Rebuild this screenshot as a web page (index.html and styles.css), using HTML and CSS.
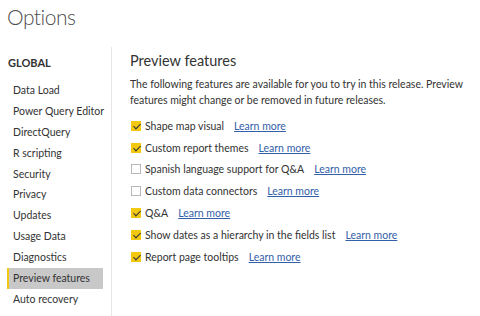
FILE: index.html
```html
<!DOCTYPE html>
<html lang="en">
<head>
    <meta charset="UTF-8">
    <title>Options</title>
    <link rel="stylesheet" href="styles.css">
</head>
<body>
    <div class="dialog">
        <h1 class="title">Options</h1>

        <div class="main">
            <div class="sidebar">
                <div class="group-label">GLOBAL</div>
                <ul class="nav">
                    <li>Data Load</li>
                    <li>Power Query Editor</li>
                    <li>DirectQuery</li>
                    <li>R scripting</li>
                    <li>Security</li>
                    <li>Privacy</li>
                    <li>Updates</li>
                    <li>Usage Data</li>
                    <li>Diagnostics</li>
                    <li class="active">Preview features</li>
                    <li>Auto recovery</li>
                </ul>
            </div>

            <div class="content">
                <h2>Preview features</h2>
                <p class="desc">The following features are available for you to try in this release. Preview features might change or be removed in future releases.</p>

                <div class="options">
                    <label class="option"><span class="box checked"></span>Shape map visual<a href="#">Learn more</a></label>
                    <label class="option"><span class="box checked"></span>Custom report themes<a href="#">Learn more</a></label>
                    <label class="option"><span class="box"></span>Spanish language support for Q&amp;A<a href="#">Learn more</a></label>
                    <label class="option"><span class="box"></span>Custom data connectors<a href="#">Learn more</a></label>
                    <label class="option"><span class="box checked"></span>Q&amp;A<a href="#">Learn more</a></label>
                    <label class="option"><span class="box checked"></span>Show dates as a hierarchy in the fields list<a href="#">Learn more</a></label>
                    <label class="option"><span class="box checked"></span>Report page tooltips<a href="#">Learn more</a></label>
                </div>
            </div>
        </div>
    </div>
</body>
</html>
```
FILE: styles.css
```css
:root {
    --text-color: #333333;
    --title-color: #505050;
    --link-color: #3460a8;
    --accent-color: #f2c811;
    --border-color: #e6e6e6;
    --selected-bg: #c8c8c8;
}

* {
    margin: 0;
    padding: 0;
    box-sizing: border-box;
}

body {
    font-family: 'Lato', 'Open Sans', sans-serif;
    font-size: 10.5px;
    color: var(--text-color);
    background-color: white;
}

.dialog {
    width: 480px;
    height: 316px;
    overflow: hidden;
}

.title {
    font-size: 21px;
    font-weight: 300;
    letter-spacing: -0.5px;
    color: var(--title-color);
    padding: 2px 0 0 7px;
    line-height: 30px;
    height: 47px;
}

.main {
    display: flex;
}

.sidebar {
    width: 112px;
    border-right: 1px solid var(--border-color);
    height: 269px;
    padding: 8px 8px 0 7px;
}

.group-label {
    font-weight: 700;
    font-size: 11px;
    padding-left: 1px;
    line-height: 16px;
    margin-bottom: 9px;
}

.nav {
    list-style: none;
}

.nav li {
    height: 20.9px;
    line-height: 20.9px;
    padding-left: 4px;
    border-left: 2px solid transparent;
    white-space: nowrap;
}

.nav li.active {
    background-color: var(--selected-bg);
    border-left-color: var(--accent-color);
}

.content {
    flex: 1;
    padding: 4px 0 0 18px;
}

h2 {
    font-size: 14.5px;
    font-weight: 400;
    color: var(--text-color);
    line-height: 20px;
    margin-bottom: 5px;
}

.desc {
    line-height: 16px;
    margin-bottom: 7px;
}

.option {
    display: flex;
    align-items: center;
    height: 21.8px;
    white-space: nowrap;
}

.box {
    width: 10px;
    height: 10px;
    border: 1px solid #b8b8b8;
    margin: 0 4px 0 1px;
    position: relative;
}

.box.checked {
    background-color: var(--accent-color);
    border-color: var(--accent-color);
}

.box.checked::after {
    content: "";
    position: absolute;
    left: 2.5px;
    top: 0;
    width: 3px;
    height: 6px;
    border: solid #333;
    border-width: 0 1.5px 1.5px 0;
    transform: rotate(45deg);
}

.option a {
    color: var(--link-color);
    margin-left: 10px;
}
```
